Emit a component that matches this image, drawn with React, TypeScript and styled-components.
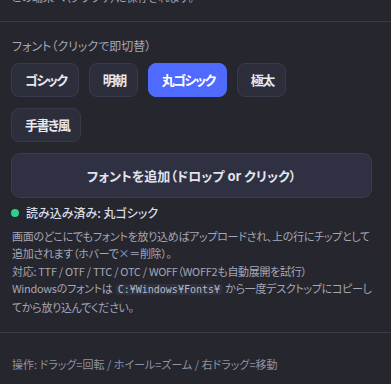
import * as React from 'react';
import styled, { createGlobalStyle } from 'styled-components';

const GlobalStyle = createGlobalStyle`
  html, body {
    margin: 0;
    padding: 0;
    background: #26262f;
    overflow: hidden;
  }
  body {
    font-family: "Noto Sans CJK JP", "Noto Sans", sans-serif;
    font-feature-settings: "palt";
    color: #d4d6e0;
  }
`;

const fonts = ['ゴシック', '明朝', '丸ゴシック', '極太', '手書き風'];

export default function App() {
  const [active, setActive] = React.useState('丸ゴシック');

  return (
    <Panel>
      <GlobalStyle />
      <TopSection>
        <Note>この端末へ（ブラウザ）に保存されます。</Note>
      </TopSection>
      <Divider />
      <FontSection>
        <Label>フォント（クリックで即切替）</Label>
        <Chips>
          {fonts.map(name => (
            <Chip key={name} active={name === active} onClick={() => setActive(name)}>
              {name}
            </Chip>
          ))}
        </Chips>
        <AddButton>フォントを追加（ドロップ or クリック）</AddButton>
        <Status>
          <Dot />
          読み込み済み: {active}
        </Status>
        <Help>
          画面のどこにでもフォントを放り込めばアップロードされ、上の行にチップとして追加されます（ホバーで×＝削除）。
          <br />
          対応: TTF / OTF / TTC / OTC / WOFF（WOFF2も自動展開を試行）
          <br />
          Windowsのフォントは <Code>C:¥Windows¥Fonts¥</Code> から一度デスクトップに<Keep>コピーし</Keep>てから放り込んでください。
        </Help>
      </FontSection>
      <Divider />
      <Footer>操作: ドラッグ=回転 / ホイール=ズーム / 右ドラッグ=移動</Footer>
    </Panel>
  );
}

const Panel = styled.div`
  width: 391px;
  height: 384px;
  overflow: hidden;
`;

const TopSection = styled.div`
  margin-top: -11px;
  padding: 0 19px 14px 12px;
`;

const Note = styled.div`
  font-size: 11px;
  line-height: 17.6px;
  color: #a4a7b5;
`;

const Divider = styled.div`
  height: 1px;
  background: #3a3b47;
`;

const FontSection = styled.div`
  padding: 15px 19px 15px 11px;
`;

const Label = styled.div`
  font-size: 12px;
  line-height: 18px;
  color: #a4a7b5;
  padding-left: 1px;
`;

const Chips = styled.div`
  display: flex;
  flex-wrap: wrap;
  gap: 11px 10px;
  margin-top: 8px;
  padding-right: 24px;
`;

const Chip = styled.button<{ active?: boolean }>`
  font-family: inherit;
  font-feature-settings: "palt";
  font-size: 13px;
  font-weight: 700;
  line-height: 16px;
  letter-spacing: -1.5px;
  padding: 8px 11px 8px 13px;
  border-radius: 8px;
  border: 1px solid ${p => (p.active ? '#4f6bff' : '#383a4a')};
  background: ${p => (p.active ? '#4f6bff' : '#2d2e3b')};
  color: ${p => (p.active ? '#ffffff' : '#e6e8f0')};
  cursor: pointer;
`;

const AddButton = styled.button`
  display: block;
  width: 100%;
  margin-top: 11px;
  height: 45px;
  font-family: inherit;
  font-feature-settings: "palt";
  font-size: 13px;
  font-weight: 700;
  color: #e2e4ee;
  background: #2f3041;
  border: 1px solid #3b3d4f;
  border-radius: 9px;
  cursor: pointer;
`;

const Status = styled.div`
  display: flex;
  align-items: center;
  gap: 7px;
  margin-top: 6px;
  font-size: 12px;
  line-height: 18px;
  font-weight: 500;
  color: #d8dae4;
`;

const Dot = styled.span`
  width: 8px;
  height: 8px;
  border-radius: 50%;
  background: #2fcf8c;
  flex-shrink: 0;
`;

const Help = styled.p`
  margin: 6px -6px 0 0;
  padding-left: 1px;
  font-size: 11px;
  line-height: 17.6px;
  letter-spacing: -0.3px;
  color: #a4a7b5;
`;

const Keep = styled.span`
  white-space: nowrap;
`;

const Code = styled.code`
  font-family: "DejaVu Sans Mono", "Liberation Mono", monospace;
  font-size: 10px;
  letter-spacing: 0;
  padding: 0 2px;
  margin: 0 1px;
  border-radius: 3px;
  background: #30313d;
  color: #b8bbc8;
`;

const Footer = styled.div`
  padding: 22px 12px 0;
  font-size: 11px;
  line-height: 18px;
  color: #8f93a2;
`;
